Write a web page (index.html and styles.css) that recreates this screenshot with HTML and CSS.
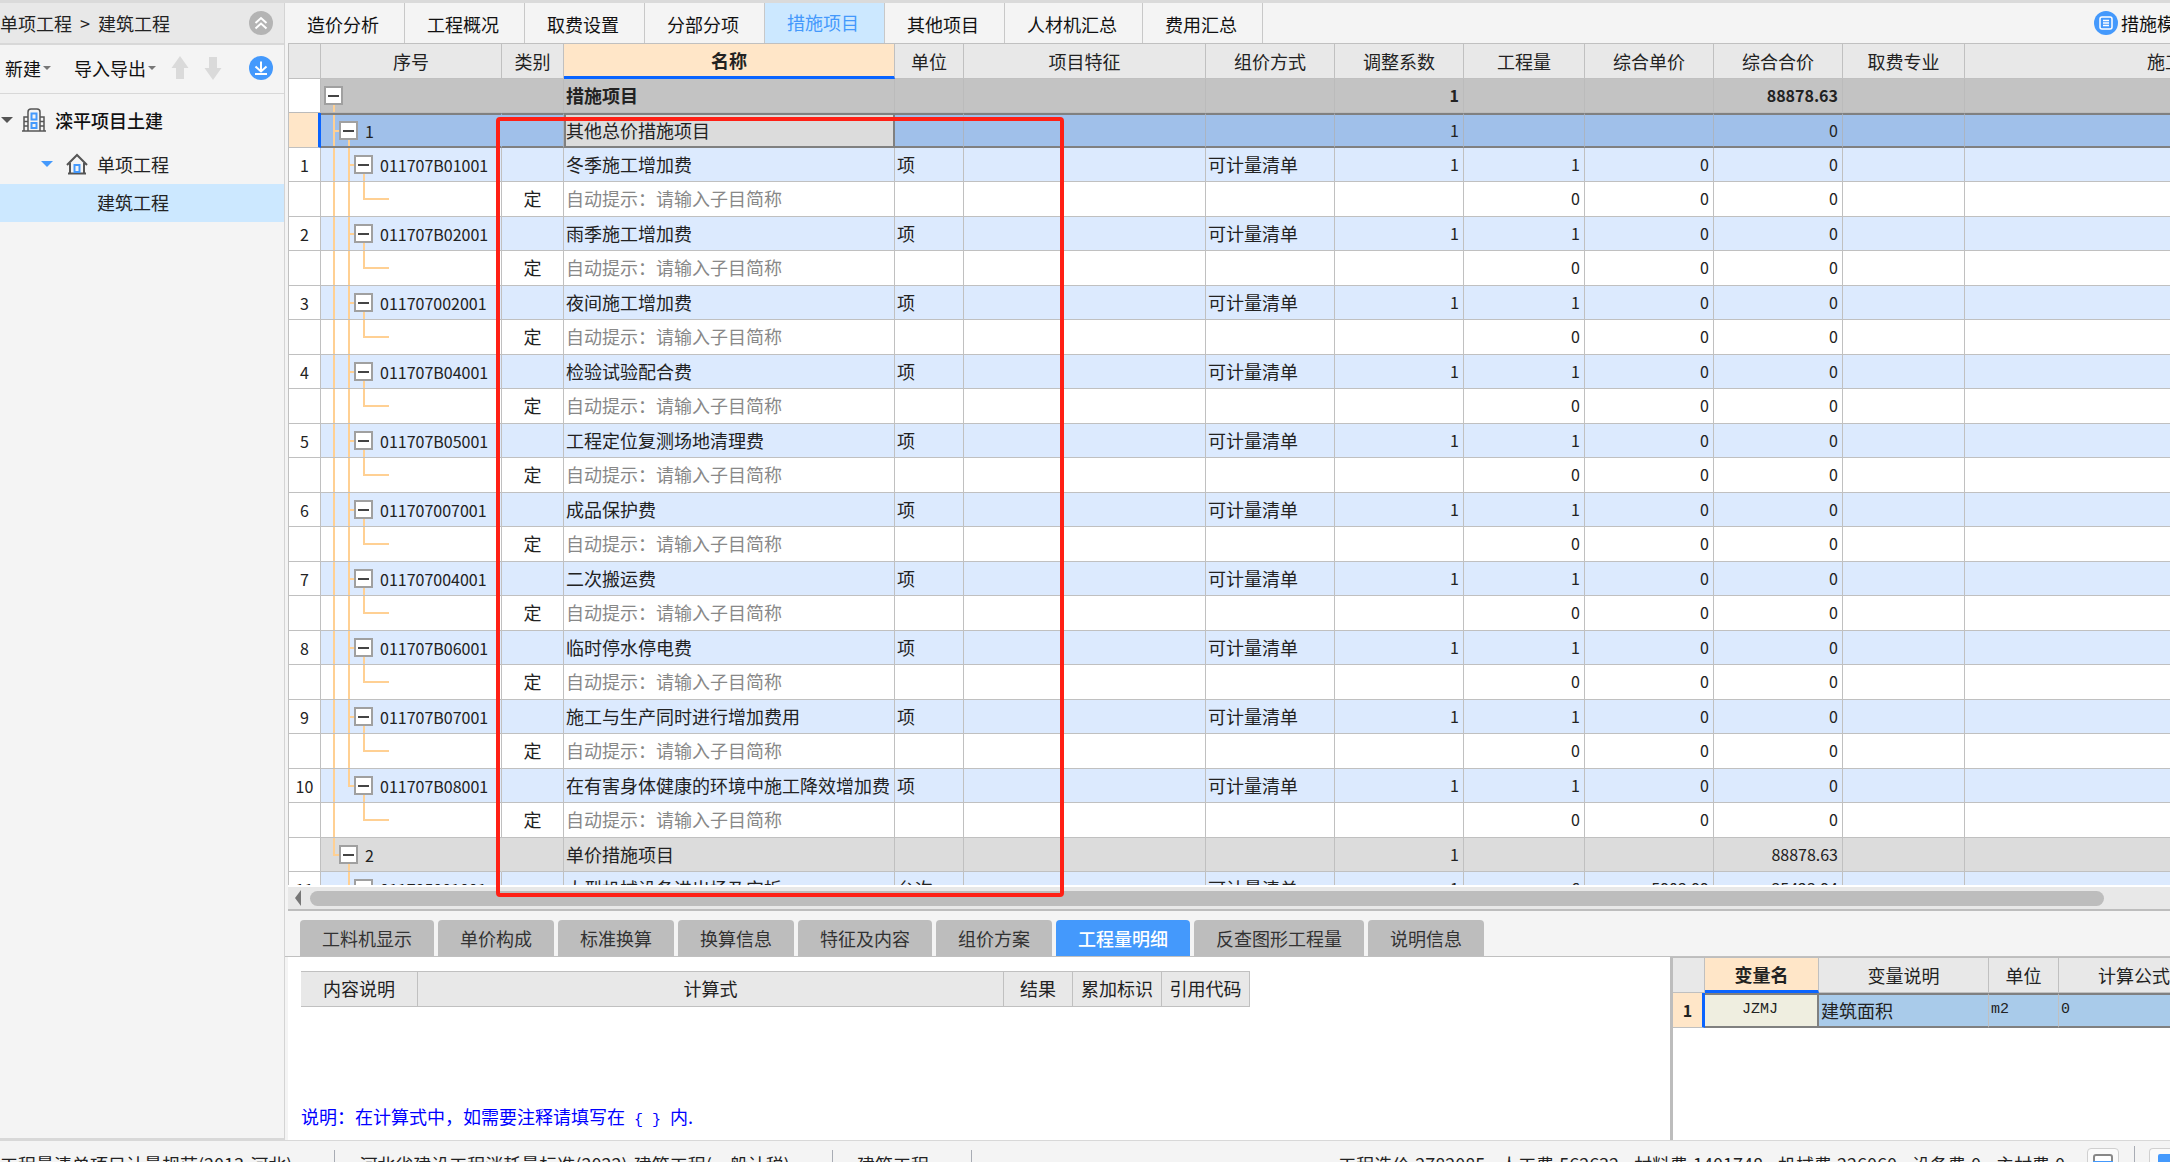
FILE: index.html
```html
<!DOCTYPE html>
<html lang="zh-CN">
<head>
<meta charset="utf-8">
<title>措施项目</title>
<link rel="stylesheet" href="styles.css">
</head>
<body>
<div class="workspace">
  <aside class="sidebar">
    <nav class="crumbs">
      <span>单项工程</span><span class="sep">&gt;</span><span>建筑工程</span>
      <button class="icon-btn push" aria-label="收起">
        <svg width="24" height="24" viewBox="0 0 24 24"><circle cx="12" cy="12" r="12" fill="#b4b4b4"/><path d="M6.500 12 12 7l5.500 5M6.500 17.500 12 12.500l5.500 5" fill="none" stroke="#fff" stroke-width="2"/></svg>
      </button>
    </nav>
    <div class="tools">
      <button class="tool">新建<i class="caret"></i></button>
      <button class="tool">导入导出<i class="caret"></i></button>
      <button class="icon-btn" aria-label="上移"><svg width="18" height="24" viewBox="0 0 18 24"><path d="M9 0l8.500 12H13v11H5V12H.5z" fill="#dadada"/></svg></button>
      <button class="icon-btn" aria-label="下移"><svg width="18" height="24" viewBox="0 0 18 24"><path d="M9 24l8.500-12H13V1H5v11H.5z" fill="#dadada"/></svg></button>
      <button class="icon-btn push" aria-label="下载">
        <svg width="24" height="24" viewBox="0 0 24 24"><circle cx="12" cy="12" r="12" fill="#4499fc"/><path d="M12 5.500v10M6.500 10.500l5.500 5 5.500-5M6 18h12" fill="none" stroke="#fff" stroke-width="2"/></svg>
      </button>
    </div>
    <ul class="tree">
      <li class="node root"><i class="twisty"></i>
        <svg width="24" height="24" viewBox="0 0 24 24" fill="none" stroke="#555" stroke-width="1.500"><path d="M0 23h24M2 23V9h4M22 23V9h-4M6 23V4q0-3 3-3h6q3 0 3 3v19M2 13.500h4M2 18h4M18 13.500h4M18 18h4"/><path d="M9.500 5.500h5v6h-5zM9.500 15h5v5h-5z" stroke="#4499fc" stroke-width="2"/></svg>
        滦平项目土建</li>
      <li class="node child"><i class="twisty blue"></i>
        <svg width="22" height="22" viewBox="0 0 22 22" fill="none" stroke="#555" stroke-width="2"><path d="M1 12 11 2l10 10M4 10v10M18 10v10M2 20.500h18"/><path d="M8.500 12h5v7h-5z" stroke="#4499fc"/></svg>
        单项工程</li>
      <li class="node leaf">建筑工程</li>
    </ul>
  </aside>

  <main class="main">
    <nav class="tabs">
      <button>造价分析</button><button>工程概况</button><button>取费设置</button><button>分部分项</button><button class="on">措施项目</button><button>其他项目</button><button>人材机汇总</button><button>费用汇总</button>
      <button class="template">
        <svg width="24" height="24" viewBox="0 0 24 24"><circle cx="12" cy="12" r="12" fill="#4499fc"/><rect x="6" y="6" width="12" height="12" rx="2" fill="none" stroke="#fff" stroke-width="1.500"/><path d="M9 9.500h6M9 12h6M9 14.500h6" stroke="#fff" stroke-width="1.500"/></svg>
        措施模板</button>
    </nav>

    <div class="grid-wrap">
      <table class="grid">
        <colgroup><col class="w-no"><col class="w-seq"><col class="w-kind"><col class="w-name"><col class="w-unit"><col class="w-feat"><col class="w-mid"><col class="w-mid"><col class="w-qty"><col class="w-mid"><col class="w-mid"><col class="w-spec"><col class="w-last"></colgroup>
        <thead><tr><th><th>序号<th>类别<th class="cur">名称<th>单位<th>项目特征<th>组价方式<th>调整系数<th>工程量<th>综合单价<th>综合合价<th>取费专业<th>施工组织措施类别</tr></thead>
        <tbody>
        <tr class="total"><td><td class="t0"><div class="seq"><button class="fold" aria-label="折叠"></button></div><td><td>措施项目<td><td><td><td>1<td><td><td>88878.63<td><td></tr>
        <tr class="picked"><td><td class="t1"><div class="seq lv1"><button class="fold" aria-label="折叠"></button>1</div><td><td>其他总价措施项目<td><td><td><td>1<td><td><td>0<td><td></tr>

        <tr class="item"><td>1<td class="t2"><div class="seq lv2"><button class="fold" aria-label="折叠"></button>011707B01001</div><td><td>冬季施工增加费<td>项<td><td>可计量清单<td>1<td>1<td>0<td>0<td><td></tr>
        <tr class="hint"><td><td class="t3"><td>定<td>自动提示：请输入子目简称<td><td><td><td><td>0<td>0<td>0<td><td></tr>
        <tr class="item"><td>2<td class="t2"><div class="seq lv2"><button class="fold" aria-label="折叠"></button>011707B02001</div><td><td>雨季施工增加费<td>项<td><td>可计量清单<td>1<td>1<td>0<td>0<td><td></tr>
        <tr class="hint"><td><td class="t3"><td>定<td>自动提示：请输入子目简称<td><td><td><td><td>0<td>0<td>0<td><td></tr>
        <tr class="item"><td>3<td class="t2"><div class="seq lv2"><button class="fold" aria-label="折叠"></button>011707002001</div><td><td>夜间施工增加费<td>项<td><td>可计量清单<td>1<td>1<td>0<td>0<td><td></tr>
        <tr class="hint"><td><td class="t3"><td>定<td>自动提示：请输入子目简称<td><td><td><td><td>0<td>0<td>0<td><td></tr>
        <tr class="item"><td>4<td class="t2"><div class="seq lv2"><button class="fold" aria-label="折叠"></button>011707B04001</div><td><td>检验试验配合费<td>项<td><td>可计量清单<td>1<td>1<td>0<td>0<td><td></tr>
        <tr class="hint"><td><td class="t3"><td>定<td>自动提示：请输入子目简称<td><td><td><td><td>0<td>0<td>0<td><td></tr>
        <tr class="item"><td>5<td class="t2"><div class="seq lv2"><button class="fold" aria-label="折叠"></button>011707B05001</div><td><td>工程定位复测场地清理费<td>项<td><td>可计量清单<td>1<td>1<td>0<td>0<td><td></tr>
        <tr class="hint"><td><td class="t3"><td>定<td>自动提示：请输入子目简称<td><td><td><td><td>0<td>0<td>0<td><td></tr>
        <tr class="item"><td>6<td class="t2"><div class="seq lv2"><button class="fold" aria-label="折叠"></button>011707007001</div><td><td>成品保护费<td>项<td><td>可计量清单<td>1<td>1<td>0<td>0<td><td></tr>
        <tr class="hint"><td><td class="t3"><td>定<td>自动提示：请输入子目简称<td><td><td><td><td>0<td>0<td>0<td><td></tr>
        <tr class="item"><td>7<td class="t2"><div class="seq lv2"><button class="fold" aria-label="折叠"></button>011707004001</div><td><td>二次搬运费<td>项<td><td>可计量清单<td>1<td>1<td>0<td>0<td><td></tr>
        <tr class="hint"><td><td class="t3"><td>定<td>自动提示：请输入子目简称<td><td><td><td><td>0<td>0<td>0<td><td></tr>
        <tr class="item"><td>8<td class="t2"><div class="seq lv2"><button class="fold" aria-label="折叠"></button>011707B06001</div><td><td>临时停水停电费<td>项<td><td>可计量清单<td>1<td>1<td>0<td>0<td><td></tr>
        <tr class="hint"><td><td class="t3"><td>定<td>自动提示：请输入子目简称<td><td><td><td><td>0<td>0<td>0<td><td></tr>
        <tr class="item"><td>9<td class="t2"><div class="seq lv2"><button class="fold" aria-label="折叠"></button>011707B07001</div><td><td>施工与生产同时进行增加费用<td>项<td><td>可计量清单<td>1<td>1<td>0<td>0<td><td></tr>
        <tr class="hint"><td><td class="t3"><td>定<td>自动提示：请输入子目简称<td><td><td><td><td>0<td>0<td>0<td><td></tr>
        <tr class="item"><td>10<td class="t2 end"><div class="seq lv2"><button class="fold" aria-label="折叠"></button>011707B08001</div><td><td>在有害身体健康的环境中施工降效增加费<td>项<td><td>可计量清单<td>1<td>1<td>0<td>0<td><td></tr>
        <tr class="hint"><td><td class="t3 end"><td>定<td>自动提示：请输入子目简称<td><td><td><td><td>0<td>0<td>0<td><td></tr>

        <tr class="group"><td><td class="t1 end"><div class="seq lv1"><button class="fold" aria-label="折叠"></button>2</div><td><td>单价措施项目<td><td><td><td>1<td><td><td>88878.63<td><td></tr>
        <tr class="item"><td>11<td class="t2 tail"><div class="seq lv2"><button class="fold" aria-label="折叠"></button>011705001001</div><td><td>大型机械设备进出场及安拆<td>台次<td><td>可计量清单<td>1<td>6<td>5903.99<td>35423.94<td><td></tr>
        </tbody>
      </table>
    </div>
    <div class="hscroll"><i class="arrow"></i><i class="thumb"></i></div>

    <nav class="subtabs">
      <button>工料机显示</button><button>单价构成</button><button>标准换算</button><button>换算信息</button><button>特征及内容</button><button>组价方案</button><button class="on">工程量明细</button><button>反查图形工程量</button><button>说明信息</button>
    </nav>

    <section class="detail">
      <div class="calc">
        <table class="calc-table">
          <colgroup><col class="c-note"><col class="c-expr"><col class="c-res"><col class="c-flag"><col class="c-code"></colgroup>
          <thead><tr><th>内容说明<th>计算式<th>结果<th>累加标识<th>引用代码</tr></thead>
        </table>
        <p class="remark">说明：在计算式中，如需要注释请填写在<span class="mono"> { } </span>内.</p>
      </div>
      <div class="vars">
        <table class="vars-table">
          <colgroup><col class="v-no"><col class="v-name"><col class="v-desc"><col class="v-unit"><col class="v-expr"></colgroup>
          <thead><tr><th><th class="cur">变量名<th>变量说明<th>单位<th>计算公式</tr></thead>
          <tbody><tr><td>1<td>JZMJ<td>建筑面积<td>m2<td>0</tr></tbody>
        </table>
      </div>
    </section>
    <div class="marker"></div>
  </main>
</div>

<footer class="status">
  <div class="status-line">
    <span class="cell">工程量清单项目计量规范(2013-河北)</span>
    <span class="cell">河北省建设工程消耗量标准(2022)-建筑工程(一般计税)</span>
    <span class="cell">建筑工程</span>
    <div class="sums"><span>工程造价:2782085</span><span>人工费:562632</span><span>材料费:1401748</span><span>机械费:226060</span><span>设备费:0</span><span>主材费:0</span></div>
    <button class="view" aria-label="分栏视图"><svg width="22" height="22" viewBox="0 0 22 22"><rect x="2" y="2" width="18" height="18" rx="2" fill="#fff" stroke="#888" stroke-width="2"/><path d="M1 8h20v4H1z" fill="#4499fc"/></svg></button>
    <i class="rule"></i>
    <button class="view last" aria-label="整页视图"><svg width="22" height="22" viewBox="0 0 22 22"><rect x="1" y="1" width="20" height="20" rx="2" fill="#4499fc"/></svg></button>
  </div>
</footer>
</body>
</html>
```

FILE: styles.css
```css
:root {
  --line: #c0c0c0;
  --blue: #0a64ff;
  --accent: #4499fc;
  --cur: #ffe6c8;
  --guide: #ffd093;
  --mono: "Liberation Mono", "Noto Sans CJK SC", monospace;
}
* { box-sizing: border-box; }
body {
  margin: 0;
  height: 100vh;
  display: flex;
  flex-direction: column;
  overflow: hidden;
  border-top: 3px solid #dadada;
  background: #f4f4f4;
  color: #222;
  font: 18px/24px "Noto Sans CJK SC", sans-serif;
  white-space: nowrap;
}
button { margin: 0; padding: 0; border: 0; background: none; font: inherit; color: inherit; }
svg { display: block; flex: none; }
.workspace { flex: 1; min-height: 0; display: flex; }

/* project tree */
.sidebar { flex: none; width: 285px; border-right: 1px solid #d4d4d4; border-bottom: 2px solid #d8d8d8; }
.crumbs { display: flex; align-items: center; gap: 8px; height: 42px; padding-right: 11px; background: #e8e8e8; border-bottom: 2px solid #d8d8d8; }
.push { margin-left: auto; }
.tools { display: flex; align-items: center; gap: 15px; height: 49px; padding: 0 11px 2px 5px; border-bottom: 1px solid #d8d8d8; color: #111; }
.tool { display: flex; align-items: center; gap: 2px; margin-right: 8px; }
.tool + .tool { margin-right: 0; }
.caret { border: 4px solid transparent; border-top-color: #777; border-bottom: 0; }
.tree { list-style: none; margin: 0; padding: 8px 0 0; }
.node { display: flex; align-items: center; gap: 9px; height: 38px; padding-bottom: 2px; }
.root { padding-left: 1px; margin-bottom: 6px; font-weight: 500; color: #111; }
.child { padding-left: 41px; }
.child svg { margin-left: 4px; }
.leaf { padding-left: 97px; background: #cce8ff; }
.twisty { border: 6px solid transparent; border-top-color: #555; border-bottom: 0; }
.twisty.blue { border-top-color: var(--accent); }

/* page tabs */
.main { position: relative; flex: 1; min-width: 0; display: flex; flex-direction: column; }
.tabs { flex: none; display: flex; height: 40px; overflow: hidden; }
.tabs button { padding: 2px 25px 0 22px; border-right: 1px solid #c8c8c8; color: #111; }
.tabs .on { padding-top: 0; padding-bottom: 2px; background: #cce8ff; color: var(--accent); }
.tabs .template { display: flex; align-items: center; gap: 3px; width: 76px; margin-left: auto; padding: 0; border: 0; }

/* main grid */
.grid-wrap { flex: 1; min-height: 0; overflow: hidden; margin-left: 3px; border-top: 1px solid var(--line); border-left: 1px solid var(--line); background: #fff; }
table { table-layout: fixed; border-collapse: separate; border-spacing: 0; }
th { padding: 0 0 1px; font-weight: 400; background: #e8e8e8; }
th, td { border-right: 1px solid var(--line); border-bottom: 1px solid var(--line); }
td { padding: 0 4px 2px 2px; }
th.cur { background: var(--cur); border-bottom: 3px solid var(--blue); font-weight: 700; }
.grid { width: 2185px; }
.w-no { width: 32px; } .w-seq { width: 181px; } .w-kind { width: 62px; } .w-name { width: 331px; }
.w-unit { width: 69px; } .w-feat { width: 242px; } .w-mid { width: 129px; } .w-qty { width: 121px; }
.w-spec { width: 122px; } .w-last { width: 509px; }
.grid tr { height: 34px; }
.grid thead tr, .grid .picked, .grid .hint { height: 35px; }
.grid td:first-child { padding: 0; text-align: center; font-size: 16px; background: #fff; }
.grid td:nth-child(2) { padding: 0; border-right-color: transparent; background-repeat: no-repeat; }
.grid td:nth-child(3) { padding: 0 0 2px; text-align: center; }
.grid td:nth-child(n+8) { text-align: right; font-size: 16px; }
.item td { background-color: #dceafe; }
.grid .item td:nth-child(2), .grid .hint td:nth-child(2) { border-right-color: var(--line); }
.hint td:nth-child(4) { color: #888; }
.group td { background-color: #dcdcdc; }
.total td { background-color: #c3c3c3; border-color: #bbb; font-weight: 700; }
.picked td { background-color: #a0c0ea; border-top: 2px solid #808080; border-bottom: 2px solid #808080; border-right-color: #aab4c2; }
.grid .picked td:first-child { background: var(--cur); border-top: 0; border-bottom: 1px solid var(--line); border-right: 3px solid var(--blue); }
.picked td:nth-child(4) { background-color: #dcdcdc; border-right: 2px solid #808080; border-left: 2px solid #808080; padding-left: 0; }

/* tree guides, drawn at 12px, 27px and 42px from the cell's left edge */
.seq { display: flex; align-items: center; gap: 7px; padding-left: 3px; font-size: 16px; line-height: 20px; }
.lv1 { padding-left: 18px; }
.lv2 { padding-left: 33px; }
.fold { flex: none; display: flex; align-items: center; justify-content: center; width: 19px; height: 19px; border: 2px solid #a0a0a0; background: #fff; }
.fold::before { content: ""; width: 11px; height: 2px; background: #444; }
td { --g: linear-gradient(var(--guide), var(--guide)); }
.t0 { background-image: var(--g); background-position: 12px 100%; background-size: 2px 50%; }
.t1 { background-image: var(--g), var(--g), var(--g); background-position: 12px 0, 12px 50%, 27px 100%; background-size: 2px 100%, 8px 2px, 2px 50%; }
.t1.end { background-size: 2px 50%, 8px 2px, 2px 50%; }
.t2 { background-image: var(--g), var(--g), var(--g), var(--g); background-position: 12px 0, 27px 0, 27px 50%, 42px 100%; background-size: 2px 100%, 2px 100%, 8px 2px, 2px 50%; }
.t2.end { background-size: 2px 100%, 2px 50%, 8px 2px, 2px 50%; }
.t2.tail { background-size: 0 0, 2px 100%, 8px 2px, 2px 50%; }
.t3 { background-image: var(--g), var(--g), var(--g), var(--g); background-position: 12px 0, 42px 0, 42px 50%, 27px 0; background-size: 2px 100%, 2px 50%, 26px 2px, 2px 100%; }
.t3.end { background-size: 2px 100%, 2px 50%, 26px 2px, 0 0; }

.hscroll { flex: none; display: flex; align-items: center; gap: 9px; height: 26px; margin-left: 3px; padding: 0 66px 0 7px; border-top: 2px solid #fff; border-bottom: 2px solid #bdbdbd; background: #e8e8e8; }
.arrow { border: 8px solid transparent; border-right: 6px solid #777; border-left: 0; }
.thumb { flex: 1; height: 15px; border-radius: 8px; background: #bdbdbd; }

/* lower panel */
.subtabs { flex: none; display: flex; gap: 4px; height: 46px; padding: 9px 0 0 15px; border-bottom: 1px solid var(--line); }
.subtabs button { padding: 0 22px 1px; border-radius: 4px 4px 0 0; background: #bdbdbd; color: #333; }
.subtabs .on { background: var(--accent); color: #fff; font-weight: 500; }
.detail { flex: none; display: flex; height: 183px; margin-left: 3px; background: #fff; }
.calc { flex: 1; display: flex; flex-direction: column; justify-content: space-between; padding: 14px 0 9px 13px; }
.calc-table { width: 949px; }
.calc-table th { height: 36px; padding-bottom: 2px; border-top: 1px solid var(--line); }
.c-note { width: 117px; } .c-expr { width: 586px; } .c-res { width: 69px; } .c-flag { width: 89px; } .c-code { width: 88px; }
.remark { margin: 0; color: #00f; }
.mono { font: 15px/20px var(--mono); white-space: pre; }
.vars { flex: none; width: 500px; overflow: hidden; border-left: 3px solid #bdbdbd; border-top: 1px solid #bdbdbd; }
.vars-table { width: 537px; }
.v-no { width: 32px; } .v-name { width: 114px; } .v-desc { width: 170px; } .v-unit { width: 70px; } .v-expr { width: 151px; }
.vars tr { height: 35px; }
.vars td { border-top: 2px solid #808080; border-bottom: 2px solid #808080; background: #a9cbea; }
.vars td:nth-child(1) { padding: 0; border-top: 0; border-bottom: 1px solid var(--line); border-right: 3px solid var(--blue); background: var(--cur); text-align: center; font-size: 16px; font-weight: 700; }
.vars td:nth-child(2) { text-align: center; border-right: 2px solid #808080; background: #efeee0; font: 15px/20px var(--mono); }
.vars td:nth-child(n+4) { font: 15px/20px var(--mono); }

/* annotation frame over the grid */
.marker { position: absolute; left: 211px; top: 114px; width: 568px; height: 780px; border: 4px solid #ff2015; border-radius: 4px; pointer-events: none; }

.status { flex: none; height: 22px; overflow: hidden; border-top: 1px solid #d8d8d8; }
.status-line { display: flex; align-items: center; height: 46px; }
.cell { height: 28px; line-height: 28px; padding-right: 42px; margin-right: 24px; border-right: 1px solid #a8acb4; }
.sums { display: flex; gap: 15px; margin-left: auto; margin-right: 22px; }
.view { display: flex; align-items: center; justify-content: center; width: 32px; height: 32px; border: 1px solid #d0d0d0; border-radius: 4px; background: #fafafa; }
.rule { width: 1px; height: 36px; margin: 0 14px 0 15px; background: #a8acb4; }
.last { flex: none; width: 21px; border-right: 0; border-radius: 4px 0 0 4px; justify-content: flex-start; padding-left: 7px; overflow: hidden; }
```
